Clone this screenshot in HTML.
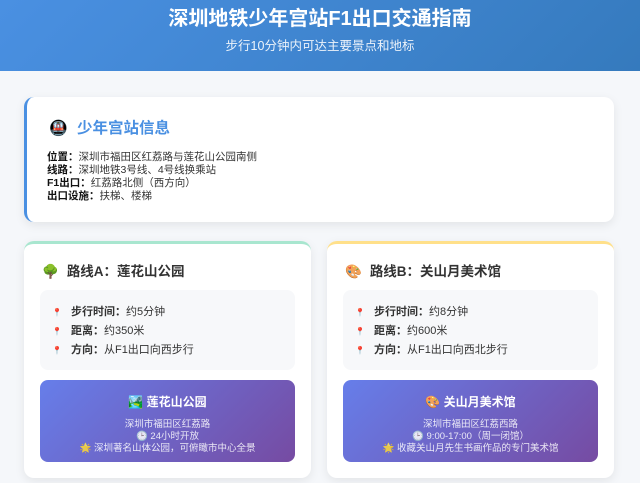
<!DOCTYPE html>
<html><head><meta charset="utf-8"><style>
*{margin:0;padding:0;box-sizing:border-box}
body{width:640px;height:483px;overflow:hidden;background:#f5f7fa;font-family:"Liberation Sans","Noto Sans CJK SC",sans-serif;color:#333;position:relative}
.hdr{position:absolute;left:0;top:0;width:640px;height:71px;background:linear-gradient(135deg,#4a90e2,#357abd);color:#fff;text-align:center}
.hdr h1{position:absolute;top:5px;width:100%;font-size:20px;font-weight:bold;line-height:28px}
.hdr p{position:absolute;top:37px;width:100%;font-size:12.5px;line-height:18px;opacity:.9}
.card{position:absolute;background:#fff;border-radius:10px;box-shadow:0 3px 10px rgba(0,0,0,.08)}
.info{left:24px;top:97px;width:590px;height:125px;border-left:3px solid #4a90e2}
.ttl{position:absolute;font-size:15.5px;font-weight:bold;color:#4a90e2;left:50px;top:22px;line-height:20px}
.ico{position:absolute;left:22px;top:22px;font-size:15px}
.lines{position:absolute;left:20px;top:54px;font-size:10.5px;line-height:13px;color:#333}
.lines b{color:#111}
.route{top:241px;width:287px;height:237px}
.ra{left:24px;border-top:3px solid #a8e6cf}
.rb{left:327px;border-top:3px solid #ffe08a}
.rt{position:absolute;left:18px;top:18px;font-size:13.5px;font-weight:bold;line-height:20px;color:#333}
.rt span{margin-right:8px}
.gray{position:absolute;left:16px;top:46px;width:255px;height:80px;background:#f7f8fa;border-radius:8px;font-size:11px;line-height:19px;padding:13px 0 0 12px}
.gray div:before{content:"📍";font-size:8px;margin-right:9px;color:#e91e63}
.purp{position:absolute;left:16px;top:136px;width:255px;height:82px;background:linear-gradient(135deg,#667eea,#764ba2);border-radius:8px;color:#fff;text-align:center;font-size:9.5px;line-height:12px;padding-top:14px}
.purp .pt{font-size:12px;font-weight:bold;line-height:16px;margin-bottom:9px}
.purp .s{opacity:.85}
</style></head><body>
<div class="hdr"><h1>深圳地铁少年宫站F1出口交通指南</h1><p>步行10分钟内可达主要景点和地标</p></div>
<div class="card info">
<div class="ico">🚇</div><div class="ttl">少年宫站信息</div>
<div class="lines">
<div><b>位置：</b>深圳市福田区红荔路与莲花山公园南侧</div>
<div><b>线路：</b>深圳地铁3号线、4号线换乘站</div>
<div><b>F1出口：</b>红荔路北侧（西方向）</div>
<div><b>出口设施：</b>扶梯、楼梯</div>
</div></div>
<div class="card route ra">
<div class="rt"><span>🌳</span>路线A：莲花山公园</div>
<div class="gray"><div><b>步行时间：</b>约5分钟</div><div><b>距离：</b>约350米</div><div><b>方向：</b>从F1出口向西步行</div></div>
<div class="purp"><div class="pt">🏞️ 莲花山公园</div><div class="s">深圳市福田区红荔路</div><div class="s">🕒 24小时开放</div><div class="s">🌟 深圳著名山体公园，可俯瞰市中心全景</div></div>
</div>
<div class="card route rb">
<div class="rt"><span>🎨</span>路线B：关山月美术馆</div>
<div class="gray"><div><b>步行时间：</b>约8分钟</div><div><b>距离：</b>约600米</div><div><b>方向：</b>从F1出口向西北步行</div></div>
<div class="purp"><div class="pt">🎨 关山月美术馆</div><div class="s">深圳市福田区红荔西路</div><div class="s">🕒 9:00-17:00（周一闭馆）</div><div class="s">🌟 收藏关山月先生书画作品的专门美术馆</div></div>
</div>
</body></html>
